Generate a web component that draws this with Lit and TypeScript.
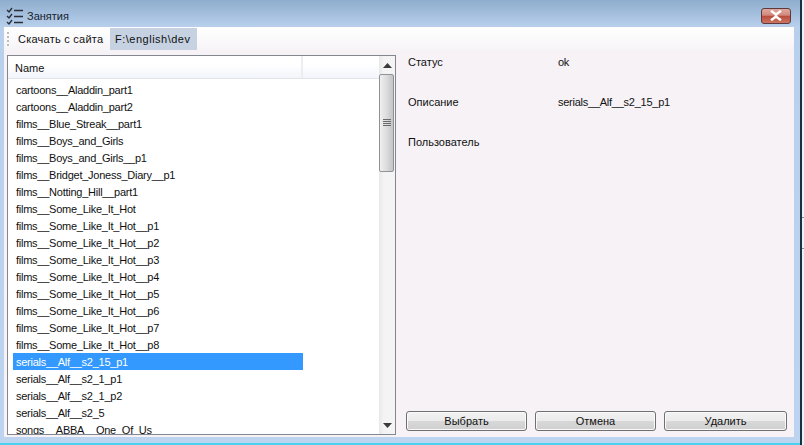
import { LitElement, html, css, svg } from "lit";
import { customElement } from "lit/decorators.js";

const ROWS = [
  "cartoons__Aladdin_part1", "cartoons__Aladdin_part2", "films__Blue_Streak__part1", "films__Boys_and_Girls",
  "films__Boys_and_Girls__p1", "films__Bridget_Joness_Diary__p1", "films__Notting_Hill__part1", "films__Some_Like_It_Hot",
  "films__Some_Like_It_Hot__p1", "films__Some_Like_It_Hot__p2", "films__Some_Like_It_Hot__p3", "films__Some_Like_It_Hot__p4",
  "films__Some_Like_It_Hot__p5", "films__Some_Like_It_Hot__p6", "films__Some_Like_It_Hot__p7", "films__Some_Like_It_Hot__p8",
  "serials__Alf__s2_15_p1", "serials__Alf__s2_1_p1", "serials__Alf__s2_1_p2", "serials__Alf__s2_5", "songs__ABBA__One_Of_Us",
];

@customElement("app-root")
export class AppRoot extends LitElement {
  static styles = css`
    :host { display: flex; width: 804px; height: 445px; overflow: hidden; background: #e4eefa;
      font-family: "Liberation Sans", Arial, sans-serif; font-size: 11px; color: #111; }
    .window { width: 800px; height: 445px; flex: none; display: flex; flex-direction: column; box-sizing: border-box;
      background: linear-gradient(#8fadcd 0, #b8d0ec 27px, #bdd4f0 100%); border-bottom: 2px solid #4ad0f0; }
    .edge { width: 2px; flex: none; background: #16323c; }
    .strip { flex: 1; display: flex; flex-direction: column; background: #e8f0fa; }
    .strip i { display: block; height: 1px; background: #8a8f96; margin-top: 30px; }
    .strip i:first-child { margin-top: 217px; }
    .title { height: 27px; flex: none; display: flex; align-items: center; box-sizing: border-box; padding-left: 5px; padding-top: 4px; gap: 2px; color: #16222e; }
    .title svg { flex: none; }
    .title .name { flex: 1; }
    .close { width: 30px; height: 16px; margin: 0 9px 0 0; box-sizing: border-box; border: 1px solid #5e3a3e; border-radius: 3px;
      background: linear-gradient(#dfa79d 0, #d2897c 45%, #b84a3a 50%, #cc7564 100%); display: flex; align-items: center; justify-content: center; }
    .client { flex: 1; min-height: 0; margin: 0 6px 6px 4px; background: #f6f2f6; display: flex; flex-direction: column; }
    .bar { height: 23px; flex: none; display: flex; align-items: stretch; background: linear-gradient(#ffffff, #f7f4f7);
      padding-top: 1px; box-sizing: border-box; }
    .grip { width: 2px; margin: 4px 0 0 3px; background: repeating-linear-gradient(#bcbcbc 0 2px, transparent 2px 4px); height: 16px; }
    .tool { display: flex; align-items: center; color: #111; }
    .tool.first { margin-left: 5px; padding: 0 3px 0 4px; width: 96px; box-sizing: border-box; letter-spacing: .25px; }
    .tool.on { background: #c6d2e2; width: 87px; box-sizing: border-box; padding: 0 0 0 5px; letter-spacing: .5px; }
    .main { flex: 1; min-height: 0; display: flex; padding: 5px 7px 2px 3px; }
    .list { width: 389px; height: 380px; flex: none; box-sizing: border-box; border: 1px solid #828790; background: #fff; display: flex; overflow: hidden; }
    .pane { flex: 1; min-width: 0; display: flex; flex-direction: column; overflow: hidden; }
    .head { height: 23px; flex: none; display: flex; background: linear-gradient(#fff 0, #fff 40%, #f2f5fb 100%); border-bottom: 1px solid #e2e4e8; box-sizing: border-box; }
    .head .col { width: 295px; box-sizing: border-box; padding: 1px 0 0 7px; display: flex; align-items: center; border-right: 2px solid #ecedf0; }
    .rows { padding: 2px 0 0 5px; }
    .row { height: 17px; width: 290px; line-height: 19px; padding-left: 3px; box-sizing: border-box; white-space: nowrap; overflow: hidden; color: #111; letter-spacing: -.25px; }
    .row.sel { background: #3399ff; color: #fff; }
    .sb { width: 16px; flex: none; display: flex; flex-direction: column; align-items: stretch; background: linear-gradient(90deg, #e8e8e8, #f4f4f4 30%, #f4f4f4); }
    .arrow { height: 18px; flex: none; display: flex; align-items: center; justify-content: center; padding-top: 1px; box-sizing: border-box; }
    .thumb { height: 98px; flex: none; box-sizing: border-box; margin: 0 1px 0 0; border: 1px solid #8f9399; border-radius: 2px;
      background: linear-gradient(90deg, #f0f0f0, #dcdcdc 50%, #c4c4c6); display: flex; align-items: center; justify-content: center; }
    .track { flex: 1; }
    .right { flex: 1; min-width: 0; display: flex; flex-direction: column; padding: 0 0 0 12px; height: 380px; box-sizing: border-box; }
    .field { display: grid; grid-template-columns: 150px 1fr; height: 40px; flex: none; padding-top: 1px; box-sizing: border-box; line-height: 13px; }
    .value { letter-spacing: -.25px; }
    .spacer { flex: 1; }
    .buttons { display: flex; gap: 8px; margin: 0 0 4px -2px; }
    button { font: inherit; color: #111; height: 20px; width: 121px; padding: 0; box-sizing: border-box; border: 1px solid #707070; border-radius: 3px;
      background: linear-gradient(#f2f2f2 0, #ebebeb 48%, #d8d8d8 52%, #cfcfcf 100%); box-shadow: inset 0 0 0 1px #fafafa; }
    button:last-child { width: 123px; }
  `;

  private icon() {
    return svg`<svg width="20" height="20" viewBox="0 0 20 20" fill="none" stroke="#2a2f3a" stroke-width="1.4">
      <path d="M2 4l2 2 3-4M2 10l2 2 3-4M2 16l2 2 3-4"/><path d="M9 4.5h9M9 10.5h9M9 16.5h9"/></svg>`;
  }

  render() {
    return html`
      <div class="window">
        <div class="title">
          ${this.icon()}
          <span class="name">Занятия</span>
          <div class="close">
            <svg width="14" height="11" viewBox="0 0 14 11"><path d="M3 1.5l4 3 4-3M3 9.5l4-3 4 3M7 4.5v2" stroke="#fff" stroke-width="2.4" fill="none" stroke-linecap="square"/></svg>
          </div>
        </div>
        <div class="client">
          <div class="bar">
            <div class="grip"></div>
            <div class="tool first">Скачать с сайта</div>
            <div class="tool on">F:\\english\\dev</div>
          </div>
          <div class="main">
            <div class="list">
              <div class="pane">
                <div class="head"><div class="col">Name</div></div>
                <div class="rows">
                  ${ROWS.map((r, i) => html`<div class="row ${i === 16 ? "sel" : ""}">${r}</div>`)}
                </div>
              </div>
              <div class="sb">
                <div class="arrow"><svg width="9" height="5" viewBox="0 0 9 5"><path d="M0 5l4.5-5L9 5z" fill="#3a3a3a"/></svg></div>
                <div class="thumb">
                  <svg width="8" height="8" viewBox="0 0 8 8"><path d="M0 .5h8M0 2.5h8M0 4.5h8M0 6.5h8" stroke="#6a6a6a"/></svg>
                </div>
                <div class="track"></div>
                <div class="arrow"><svg width="9" height="5" viewBox="0 0 9 5"><path d="M0 0l4.5 5L9 0z" fill="#3a3a3a"/></svg></div>
              </div>
            </div>
            <div class="right">
              <div class="field"><span>Статус</span><span class="value">ok</span></div>
              <div class="field"><span>Описание</span><span class="value">serials__Alf__s2_15_p1</span></div>
              <div class="field"><span>Пользователь</span><span></span></div>
              <div class="spacer"></div>
              <div class="buttons"><button>Выбрать</button><button>Отмена</button><button>Удалить</button></div>
            </div>
          </div>
        </div>
      </div>
      <div class="edge"></div>
      <div class="strip"><i></i><i></i></div>
    `;
  }
}
